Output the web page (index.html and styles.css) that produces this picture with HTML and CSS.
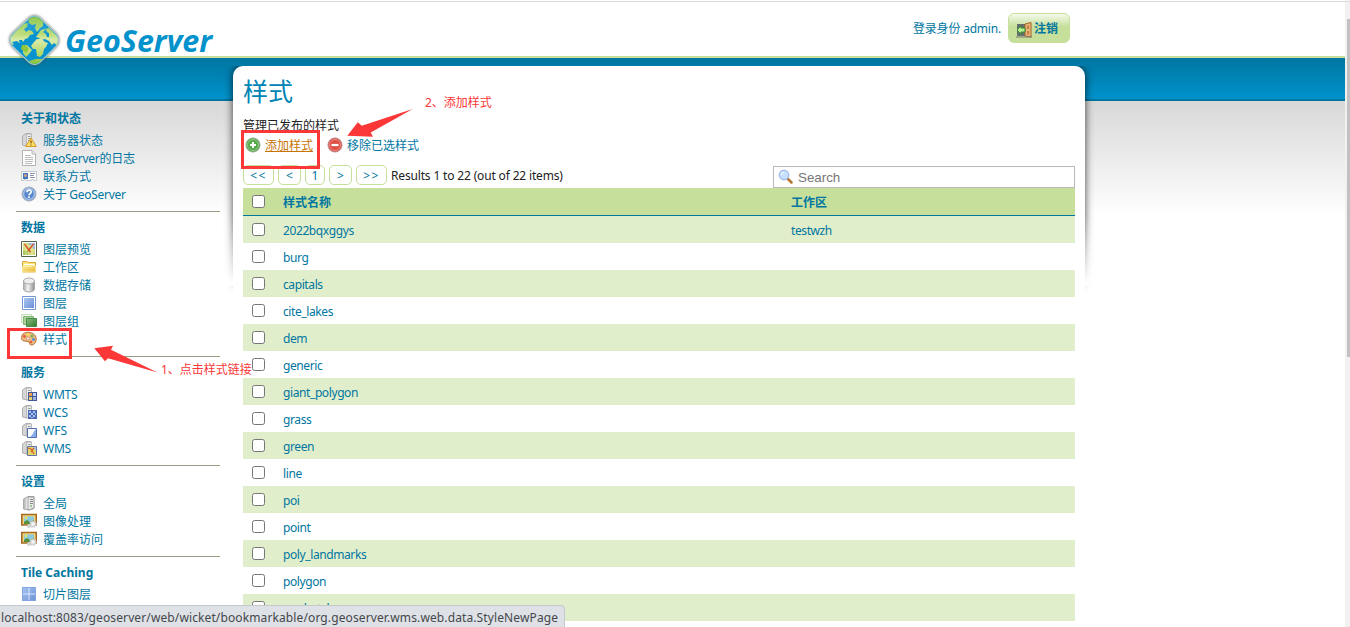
FILE: index.html
```html
<!DOCTYPE html>
<html lang="zh">
<head>
<meta charset="utf-8">
<title>GeoServer: 样式</title>
<link rel="stylesheet" href="styles.css">
</head>
<body>
<svg class="defs" width="0" height="0" aria-hidden="true">
  <defs>
    <linearGradient id="g-grey"><stop offset="0" stop-color="#aaa"/><stop offset=".4" stop-color="#f4f4f4"/><stop offset="1" stop-color="#8c8c8c"/></linearGradient>
    <linearGradient id="g-blue" x1="0" y1="0" x2="1" y2="1"><stop offset="0" stop-color="#a9c5f0"/><stop offset="1" stop-color="#6b91d6"/></linearGradient>
    <linearGradient id="g-green" x1="0" y1="0" x2="1" y2="1"><stop offset="0" stop-color="#8cc083"/><stop offset="1" stop-color="#2f7a2e"/></linearGradient>
    <linearGradient id="g-land" gradientUnits="userSpaceOnUse" x1="0" y1="4" x2="0" y2="52"><stop offset="0" stop-color="#7fc241"/><stop offset=".35" stop-color="#b5d96f"/><stop offset=".5" stop-color="#d9ebaa"/><stop offset=".8" stop-color="#b3d867"/><stop offset="1" stop-color="#84c238"/></linearGradient>
    <linearGradient id="g-yellow" x1="0" y1="0" x2="1" y2="1"><stop offset="0" stop-color="#fff0a0"/><stop offset="1" stop-color="#e9b62e"/></linearGradient>
    <symbol id="tower" viewBox="0 0 16 16"><path d="M1.500 4 5 1.500h5v10.500l-4 2-4.500-1z" fill="#d6d6d6" stroke="#b0b0b0"/><path d="M5.500 2H10.500V12.500l-5 1.500z" fill="#ececec" stroke="#aaa" stroke-width=".7"/><path d="M7 4.500H9.500M7 6.500H9.500M7 8.500H9" stroke="#999"/></symbol>
    <symbol id="warning" viewBox="0 0 16 16"><use href="#tower"/><path d="M10 6 15.300 14.500H4.700z" fill="#ffdf68" stroke="#d89b28" stroke-linejoin="round"/><path d="M10 8.500v3M10 12.500v1" stroke="#795200" stroke-width="1.200"/></symbol>
    <symbol id="page" viewBox="0 0 16 16"><path d="M1.500.500H11L14.500 4v11.500h-13z" fill="#fff" stroke="#b2b2b2"/><path d="M11 .500V4h3.500" fill="#eee" stroke="#b2b2b2"/><path d="M4 5.500h6M4 7.500h8M4 9.500h8M4 11.500h8M4 13.500h7" stroke="#aaa" stroke-width=".8"/></symbol>
    <symbol id="card" viewBox="0 0 16 16"><path d="M.500 3.500h15v9h-3v-1h-2v1H5v-1H3v1H.500z" fill="#fff" stroke="#c3c8d0"/><path d="M2 5h5v6H2z" fill="#3d75bf"/><circle cx="4.500" cy="7.500" r="1.500" fill="#d9a67d"/><path d="M9 5.500h5M9 7.500h4M9 9.500h5" stroke="#8b94aa"/></symbol>
    <symbol id="help" viewBox="0 0 16 16"><circle cx="8" cy="8" r="7" fill="#84a8da" stroke="#a4acbb"/><circle cx="8" cy="8" r="5.300" fill="#5888cb" stroke="#cbdcf5" stroke-width=".7"/><path d="M5.800 6.300c.2-3 4.700-2.800 4.500-.3-.1 1.500-2.300 1.500-2.300 3.200M8 10.300v1.700" fill="none" stroke="#fff" stroke-width="1.600"/></symbol>
    <symbol id="map" viewBox="0 0 16 16"><path d="M.500.500h15v15H.500z" fill="#fff" stroke="#53644a"/><path d="M2 2h12v12H2z" fill="#d3da7c"/><path d="M7 2h7v7z" fill="#8fb4e6"/><path d="M2 9h5v5H2z" fill="#a4c65e"/><path d="M2 9h12M5 2v12M11 2v12M2 5h12" stroke="#f5eb9f" stroke-width=".8"/><path d="m3.500 3 3 4 3 4M12.500 3 7 10" fill="none" stroke="#d8512b" stroke-width="1.300"/></symbol>
    <symbol id="folder" viewBox="0 0 16 16"><path d="M1.500 3.500v-1H6l1 1h7.500v9.500h-13z" fill="#ffe683" stroke="#d9a62d"/><path d="M2.500 5.500h11" stroke="#fff"/><path d="M6 7.500h5l1-1h2.500V13h-13V7.500z" fill="url(#g-yellow)" stroke="#fff5c8" stroke-width=".6"/></symbol>
    <symbol id="database" viewBox="0 0 16 16"><path d="M2.500 4v8c0 4 11 4 11 0V4" fill="url(#g-grey)" stroke="#aaa"/><ellipse cx="8" cy="4" rx="5.500" ry="3" fill="#eee" stroke="#aaa"/></symbol>
    <symbol id="layer" viewBox="0 0 16 16"><path d="M1.500 1.500h13v13h-13z" fill="#fff" stroke="#7395d4"/><path d="M3 3h10v10H3z" fill="url(#g-blue)"/></symbol>
    <symbol id="layers" viewBox="0 0 16 16"><path d="M.500 1.500h10v8H.500z" fill="#eff6ec" stroke="#c5dfbc"/><path d="M2.500 3.500h10v8h-10z" fill="#a9cf9d" stroke="#82b577"/><path d="M5.500 5.500h10v8h-10z" fill="url(#g-green)" stroke="#478b43"/></symbol>
    <symbol id="palette" viewBox="0 0 16 16"><path d="M2 3c4-3 10-2 12.500 2 2 4-.5 9-4 9-3 0-1-3-3.500-3.500S1 10.500.500 7.500C.500 6 1 4 2 3z" fill="#efbc86" stroke="#b76d35"/><circle cx="3.500" cy="5.500" r="1.400" fill="#e05b37"/><circle cx="7" cy="3.700" r="1.400" fill="#f2df51"/><circle cx="11" cy="5" r="1.500" fill="#6bb251"/><circle cx="12.500" cy="8.500" r="1.400" fill="#558bd0"/><circle cx="10" cy="11" r="1.300" fill="#e05b37"/><circle cx="7" cy="7.500" r="1.500" fill="#fff" stroke="#b76d35" stroke-width=".6"/></symbol>
    <symbol id="wmts" viewBox="0 0 16 16"><use href="#tower"/><path d="M7 6h9v9H7z" fill="#47599c"/><path d="M8 7h3v3H8z" fill="#f0a04a"/><path d="M12 7h3v3h-3z" fill="#bbd5fa"/><path d="M8 11h3v3H8z" fill="#e3d667"/><path d="M12 11h3v3h-3z" fill="#9bb4e0"/></symbol>
    <symbol id="wcs" viewBox="0 0 16 16"><use href="#tower"/><path d="M7 6h9v9H7z" fill="#4a68b5"/><path d="M8 7h2v2H8zM12 7h2v2h-2zM10 9h2v2h-2zM14 9h1v2h-1zM8 11h2v2H8zM12 11h2v2h-2zM10 13h2v1h-2z" fill="#a9c3f2"/></symbol>
    <symbol id="wfs" viewBox="0 0 16 16"><use href="#tower"/><path d="M6.500 6.500h9v9h-9z" fill="#f7fbff" stroke="#536cb4"/><path d="M15 7v8H8c4-.5 3-4 7-8z" fill="#88aee9"/></symbol>
    <symbol id="wms" viewBox="0 0 16 16"><use href="#tower"/><path d="M6.500 6.500h9v9h-9z" fill="#e4d66a" stroke="#6376a3"/><path d="M12 7h3v4z" fill="#a8c8ee"/><path d="m7 8 3 1 3 5m0-6-3 4" fill="none" stroke="#d76130" stroke-width="1.300"/></symbol>
    <symbol id="server" viewBox="0 0 16 16"><path d="M2.500 4 7 1.500h6v12L8 15l-5.500-1z" fill="url(#g-grey)" stroke="#aaa"/><path d="M7 2h6v11l-5 2H7z" fill="#e9e9e9" stroke="#888" stroke-width=".7"/><path d="M9 4.500h3M9 6.500h3M9 8.500h3" stroke="#888"/><path d="M9 11h2" stroke="#54a44a"/></symbol>
    <symbol id="picture" viewBox="0 0 16 16"><path d="M.800 1.500h14.500V12H.800z" fill="#f2d27d" stroke="#a36c22" stroke-width="1.600"/><path d="M3 3.500h10v7H3z" fill="#8bc9df"/><path d="m3 9 3-2 3 2 4-2v4H3z" fill="#52923c"/><circle cx="5" cy="5" r="1.200" fill="#f7e756"/><circle cx="12" cy="11" r="3" fill="#e4e4e4" stroke="#c4c4c4" stroke-width="1.600" stroke-dasharray="1.500 1"/><circle cx="12" cy="11" r="1" fill="#fff"/><circle cx="8" cy="13" r="2" fill="#d0d0d0"/></symbol>
    <symbol id="tiles" viewBox="0 0 16 16"><path d="M1 1h14v14H1z" fill="url(#g-blue)"/><path d="M8 1v14M1 8h14" stroke="#dae7ff"/><path d="M1.500 1.500h13v13h-13z" fill="none" stroke="#83a6e0"/></symbol>
    <symbol id="globe" viewBox="0 0 16 16"><circle cx="8" cy="8" r="6.500" fill="#68c7ce" stroke="#267f8d"/><path d="m4 5 3-2 5 2-1 4-4 4-1-5z" fill="#3b9b63"/></symbol>
  </defs>
</svg>

<header class="header">
  <div class="brand">
    <svg class="mark" viewBox="0 0 60 56" aria-hidden="true">
      <defs><clipPath id="diamond"><path d="M23.500 6.500q5-4 10 0l16.500 16q4 5.500 0 11L33.500 50q-5 4-10 0L6.500 33.500q-4-5.500 0-11z"/></clipPath></defs>
      <path class="mark-edge" d="M23 5.500q5.500-4 11 0L51 22q4 6 0 12L34 51q-5.500 4-11 0L5.500 34q-4-6 0-12z"/>
      <g clip-path="url(#diamond)">
        <path d="M0 0h60v56H0z" fill="#0793cf"/>
        <g fill="url(#g-land)">
          <path d="M2 28 17 12l5-1-1 4-3 2 2 3 3-2 3 1 2 3-4 1-2 3-3 1-2 3-1-2h-3l1 4 3 2-3 1-5-5-2 3z"/>
          <path d="m17 34 4-1 3 3 2 2-3 4-3 3-3-4z"/>
          <path d="M22 6 34 4l5 5-2 2v3l-3 2-3 4-2-4 1-4-4 1-3-2z"/>
          <path d="m28 30 3-3h5l3 3 3 1-2 4-2 2-1 5-3 3-3-1-1-7h-3l-2-3z"/>
          <path d="m30 25 2-3 3-4 4-1 4-1 12 12-3 6-4-3-2 2-3-4-4-2-4 1-2-2z"/>
          <path d="m23 49 7-2 8 0-5 6h-8z"/>
        </g>
        <path d="m37 20 3-3 1 3 2 1v4h-2l-1-3z" fill="#0793cf"/>
        <path d="m6 30 5-1 5 4v8z" fill="#0793cf"/>
        <path d="m16 33 4 0 3 4-3 4-5-4z" fill="#8ec63f"/>
        <path d="M6 24Q16 10 26 6h5l19 18Q30 15 6 24z" fill="#fff" opacity=".1"/>
      </g>
    </svg>
    <svg class="wordmark" viewBox="0 0 150 40"><text x="0" y="30" textLength="147" lengthAdjust="spacingAndGlyphs">GeoServer</text></svg>
  </div>
  <div class="session">
    <span class="who">登录身份 admin.</span>
    <a class="logout"><svg viewBox="0 0 16 16"><path d="M1 2h9v12H1z" fill="#66706a"/><path d="M9 2 15 .500V15l-6-1z" fill="#e9b47a" stroke="#a36427"/><path d="m11 4 2-1v4h-2zM11 9h2v4l-2-1z" fill="#c68246"/><path d="m1 8 4-4v2h4v4H5v2z" fill="#b9f28f" stroke="#318b32"/><path d="M0 15h16" stroke="#777"/></svg>注销</a>
  </div>
</header>
<div class="band"></div>

<div class="body">
  <nav class="sidebar">
    <section><h2>关于和状态</h2><ul>
      <li><svg><use href="#warning"/></svg>服务器状态</li>
      <li><svg><use href="#page"/></svg><span>GeoServer的日志</span></li>
      <li><svg><use href="#card"/></svg>联系方式</li>
      <li><svg><use href="#help"/></svg><span>关于 GeoServer</span></li></ul></section>
    <section><h2>数据</h2><ul>
      <li><svg><use href="#map"/></svg>图层预览</li>
      <li><svg><use href="#folder"/></svg>工作区</li>
      <li><svg><use href="#database"/></svg>数据存储</li>
      <li><svg><use href="#layer"/></svg>图层</li>
      <li><svg><use href="#layers"/></svg>图层组</li>
      <li><svg><use href="#palette"/></svg>样式</li></ul></section>
    <section><h2>服务</h2><ul>
      <li><svg><use href="#wmts"/></svg><span>WMTS</span></li>
      <li><svg><use href="#wcs"/></svg>WCS</li>
      <li><svg><use href="#wfs"/></svg>WFS</li>
      <li><svg><use href="#wms"/></svg><span>WMS</span></li></ul></section>
    <section><h2>设置</h2><ul>
      <li><svg><use href="#server"/></svg>全局</li>
      <li><svg><use href="#picture"/></svg>图像处理</li>
      <li><svg><use href="#picture"/></svg>覆盖率访问</li></ul></section>
    <section><h2>Tile Caching</h2><ul>
      <li><svg><use href="#tiles"/></svg>切片图层</li>
      <li><svg><use href="#globe"/></svg></li></ul></section>
  </nav>

  <div class="panel-wrap">
  <main class="panel">
    <h1>样式</h1>
    <p class="intro">管理已发布的样式</p>
    <div class="actions">
      <a class="add"><svg viewBox="0 0 16 16"><circle cx="8" cy="8" r="7" fill="#58a84c" stroke="#91a98b"/><circle cx="8" cy="8" r="5.500" fill="none" stroke="#a6d69d" stroke-width=".7"/><path d="M8 5v6M5 8h6" stroke="#fff" stroke-width="2"/></svg><span>添加样式</span></a>
      <a><svg viewBox="0 0 16 16"><circle cx="8" cy="8" r="7" fill="#de5046" stroke="#ba8582"/><circle cx="8" cy="8" r="5.500" fill="none" stroke="#f2a099" stroke-width=".7"/><path d="M4.500 8h7" stroke="#fff" stroke-width="2.200"/></svg><span>移除已选样式</span></a>
    </div>
    <div class="toolbar">
      <div class="pager"><a class="wide">&lt;&lt;</a><a>&lt;</a><a class="num">1</a><a>&gt;</a><a class="wide">&gt;&gt;</a><span>Results 1 to 22 (out of 22 items)</span></div>
      <div class="search"><svg viewBox="0 0 16 16"><path d="m9.500 9.500 4 4" stroke="#b57836" stroke-width="2.600" stroke-linecap="round"/><circle cx="6" cy="6" r="4.700" fill="#c5e1ff" stroke="#a5bde8" stroke-width="1.400"/><path d="M3.500 6c0-2 1-2.500 2.500-2.500" fill="none" stroke="#fff"/></svg><span>Search</span></div>
    </div>
    <div class="table">
      <div class="row head"><i></i><b>样式名称</b><b>工作区</b></div>
      <div class="row"><i></i><a>2022bqxggys</a><a>testwzh</a></div>
      <div class="row"><i></i><a>burg</a></div>
      <div class="row"><i></i><a>capitals</a></div>
      <div class="row"><i></i><a>cite_lakes</a></div>
      <div class="row"><i></i><a>dem</a></div>
      <div class="row"><i></i><a>generic</a></div>
      <div class="row"><i></i><a>giant_polygon</a></div>
      <div class="row"><i></i><a>grass</a></div>
      <div class="row"><i></i><a>green</a></div>
      <div class="row"><i></i><a>line</a></div>
      <div class="row"><i></i><a>poi</a></div>
      <div class="row"><i></i><a>point</a></div>
      <div class="row"><i></i><a>poly_landmarks</a></div>
      <div class="row"><i></i><a>polygon</a></div>
      <div class="row"><i></i><a>pophatch</a></div>
    </div>
  </main>
  </div>
</div>

<div class="scrollbar"><div class="thumb"></div></div>
<div class="topline"></div>
<div class="box box-style"></div>
<div class="box box-add"></div>
<svg class="arrows" viewBox="0 0 1350 627" aria-hidden="true"><path d="m94.300 348.300 18.700-2.600-2 4 46.500 22.800-49.500-14.300-3 3z"/><path d="m347.300 135.700 10.500-13.500 4 3.600L412.700 109l-42 23.500 2.300 4.200z"/></svg>
<span class="note note-1">1、点击样式链接</span>
<span class="note note-2">2、添加样式</span>
<div class="status">localhost:8083/geoserver/web/wicket/bookmarkable/org.geoserver.wms.web.data.StyleNewPage</div>
</body>
</html>
```
FILE: styles.css
```css
* { box-sizing: border-box; }
html, body { height: 627px; margin: 0; overflow: hidden; }
body {
  position: relative;
  background: #fff;
  color: #222;
  font: 12px/18px "Noto Sans", "Noto Sans CJK SC", sans-serif;
}
h1, h2, p, ul { margin: 0; padding: 0; }
ul { list-style: none; }
.defs { position: absolute; }

.header {
  display: flex;
  justify-content: space-between;
  width: 1345px;
  height: 58px;
  padding: 13px 275px 0 6px;
  border-bottom: 2px solid #c6df9b;
}
.brand { display: flex; position: relative; z-index: 2; }
.mark { width: 60px; height: 56px; margin-top: -1px; flex: none; overflow: visible; filter: drop-shadow(0 0 1.5px #555); }
.mark-edge { fill: #a9d3d3; }
.wordmark { width: 150px; height: 40px; margin: 9px 0 0 -1px; overflow: visible; }
.wordmark text { font: italic 700 31px "Open Sans", sans-serif; fill: #0492cc; }
.session { display: flex; color: #0076a1; }
.who { padding-top: 7px; margin-right: 7px; letter-spacing: -.2px; }
.logout {
  display: flex;
  align-items: center;
  width: 62px;
  height: 30px;
  padding: 2px 0 0 7px;
  border: 1px solid #c6df9b;
  border-radius: 6px;
  background: linear-gradient(#f5faec, #c6df9b 45%);
  font-weight: 700;
}
.logout svg { width: 16px; height: 16px; margin: 2px 2px 0 0; }

.band {
  width: 1345px;
  height: 43px;
  background: linear-gradient(#0076a1, #0092cc);
  border-bottom: 2px solid #0076a1;
}

.body {
  display: flex;
  width: 1345px;
  height: 526px;
  background: linear-gradient(#d8d8d8, #fff 115px);
}
.sidebar { width: 204px; margin: 2px 13px 0 16px; color: #0076a1; flex: none; }
.sidebar section { padding-bottom: 7px; border-bottom: 1px solid #949f83; }
.sidebar h2 { height: 29px; padding: 6px 5px 0; font-size: 12px; line-height: 19px; }
.sidebar li { display: flex; align-items: center; height: 18px; padding-left: 5px; }
.sidebar li svg { width: 16px; height: 16px; margin: -2px 6px 0 0; }
.sidebar li span { letter-spacing: -.27px; }

.panel-wrap { position: relative; width: 852px; height: 561px; margin-top: -35px; flex: none; }
.panel-wrap::before {
  content: "";
  position: absolute;
  inset: 0 0 auto;
  height: 220px;
  border-radius: 10px;
  box-shadow: 0 0 9px rgba(0, 0, 0, .75);
  mask: linear-gradient(#000 150px, transparent 220px);
  mask-clip: no-clip;
}
.panel { position: relative; height: 561px; padding: 6px 10px 0; background: #fff; border-radius: 10px 10px 0 0; }
.panel h1 { height: 44px; color: #0084b5; font-size: 25px; font-weight: 400; line-height: 38px; }
.intro { height: 21px; line-height: 20px; }
.actions { display: flex; gap: 14px; height: 25px; padding: 0 2px; color: #0076a1; }
.actions a { display: flex; align-items: center; height: 18px; }
.actions svg { width: 16px; height: 16px; margin: -2px 4px 0 0; }
.add { color: #c77405; text-decoration: underline; }

.toolbar { display: flex; justify-content: space-between; height: 26px; }
.pager { display: flex; gap: 4px; padding-top: 3px; }
.pager a { width: 23px; height: 20px; border: 1px solid #c6df9b; border-radius: 5px; color: #0076a1; text-align: center; line-height: 20px; }
.pager .wide { width: 31px; letter-spacing: 1.5px; }
.pager .num { width: 20px; }
.pager span { letter-spacing: -.16px; padding-top: 1px; line-height: 20px; }
.search { display: flex; align-items: center; width: 302px; height: 22px; margin-top: 4px; padding-left: 4px; border: 1px solid #b9b9b9; font: 13.33px "Liberation Sans", sans-serif; color: #757575; }
.search svg { width: 16px; height: 16px; margin-right: 4px; }

.row { display: grid; grid-template-columns: 40px 508px 1fr; height: 27px; color: #0076a1; line-height: 30px; letter-spacing: -.4px; }
.row:nth-child(even) { background: #e0eecb; }
.head { height: 28px; background: #c6df9b; border-bottom: 1px solid #0076a1; letter-spacing: 0; }
.row i { width: 13px; height: 13px; margin: 7px 0 0 9px; border: 1px solid #767676; border-radius: 2.5px; background: #fff; }

.scrollbar { position: absolute; top: 0; right: 0; width: 5px; height: 627px; padding: 19px 0 0 2px; background: #f1f1f1; }
.thumb { height: 338px; background: #c1c1c1; }
.topline { position: absolute; top: 1px; left: 0; width: 1350px; height: 1px; background: #dadce0; }
.box { position: absolute; border: 3px solid #fb3737; }
.box-style { left: 7px; top: 328px; width: 65px; height: 31px; }
.box-add { left: 241px; top: 130px; width: 79px; height: 39px; }
.arrows { position: absolute; inset: 0; width: 1350px; height: 627px; fill: #fb3737; }
.note { position: absolute; color: #fb3737; white-space: nowrap; }
.note-1 { left: 161px; top: 361px; }
.note-2 { left: 425px; top: 94px; }
.status {
  position: absolute;
  left: 0;
  bottom: 0;
  width: 565px;
  height: 22px;
  padding-left: 1px;
  border: solid #c5c9cf;
  border-width: 1px 1px 0 0;
  border-radius: 0 4px 0 0;
  background: #dee1e6;
  color: #45484c;
  line-height: 23px;
  white-space: nowrap;
  letter-spacing: .115px;
}
```
